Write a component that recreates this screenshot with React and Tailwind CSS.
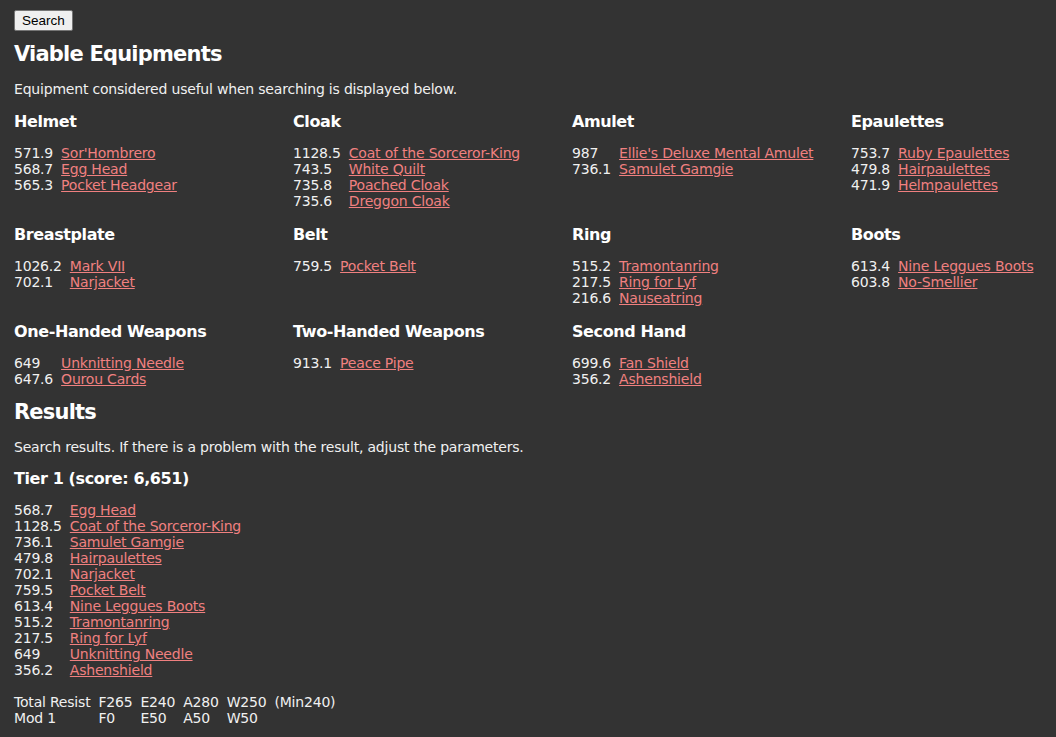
const viable = [
  {
    title: 'Helmet',
    items: [
      ['571.9', "Sor'Hombrero"],
      ['568.7', 'Egg Head'],
      ['565.3', 'Pocket Headgear'],
    ],
  },
  {
    title: 'Cloak',
    items: [
      ['1128.5', 'Coat of the Sorceror-King'],
      ['743.5', 'White Quilt'],
      ['735.8', 'Poached Cloak'],
      ['735.6', 'Dreggon Cloak'],
    ],
  },
  {
    title: 'Amulet',
    items: [
      ['987', "Ellie's Deluxe Mental Amulet"],
      ['736.1', 'Samulet Gamgie'],
    ],
  },
  {
    title: 'Epaulettes',
    items: [
      ['753.7', 'Ruby Epaulettes'],
      ['479.8', 'Hairpaulettes'],
      ['471.9', 'Helmpaulettes'],
    ],
  },
  {
    title: 'Breastplate',
    items: [
      ['1026.2', 'Mark VII'],
      ['702.1', 'Narjacket'],
    ],
  },
  {
    title: 'Belt',
    items: [['759.5', 'Pocket Belt']],
  },
  {
    title: 'Ring',
    items: [
      ['515.2', 'Tramontanring'],
      ['217.5', 'Ring for Lyf'],
      ['216.6', 'Nauseatring'],
    ],
  },
  {
    title: 'Boots',
    items: [
      ['613.4', 'Nine Leggues Boots'],
      ['603.8', 'No-Smellier'],
    ],
  },
  {
    title: 'One-Handed Weapons',
    items: [
      ['649', 'Unknitting Needle'],
      ['647.6', 'Ourou Cards'],
    ],
  },
  {
    title: 'Two-Handed Weapons',
    items: [['913.1', 'Peace Pipe']],
  },
  {
    title: 'Second Hand',
    items: [
      ['699.6', 'Fan Shield'],
      ['356.2', 'Ashenshield'],
    ],
  },
];

const tier = [
  ['568.7', 'Egg Head'],
  ['1128.5', 'Coat of the Sorceror-King'],
  ['736.1', 'Samulet Gamgie'],
  ['479.8', 'Hairpaulettes'],
  ['702.1', 'Narjacket'],
  ['759.5', 'Pocket Belt'],
  ['613.4', 'Nine Leggues Boots'],
  ['515.2', 'Tramontanring'],
  ['217.5', 'Ring for Lyf'],
  ['649', 'Unknitting Needle'],
  ['356.2', 'Ashenshield'],
];

function ItemTable({ items }) {
  return (
    <table>
      <tbody>
        {items.map(([score, name]) => (
          <tr key={name}>
            <td className="pr-2 p-0 align-top">{score}</td>
            <td className="p-0">
              <a href="#" className="text-[#f08080] underline">
                {name}
              </a>
            </td>
          </tr>
        ))}
      </tbody>
    </table>
  );
}

export default function App() {
  return (
    <div className="min-h-screen bg-[#333333] text-[#f0f0f0] font-['DejaVu_Sans',sans-serif] text-[14px] leading-4 tracking-[-0.2px] px-[14px] pt-[10px] pb-4">
      <button className="h-[21px] px-[7px] bg-[#efefef] border border-[#767676] rounded-[2px] text-black text-[13.5px] tracking-normal font-['Liberation_Sans',sans-serif] leading-none">
        Search
      </button>

      {/* Equipements retenus */}
      <h2 className="mt-[10px] text-[21px] leading-[26px] tracking-[-0.8px] font-bold text-white">Viable Equipments</h2>
      <p className="mt-[14px]">Equipment considered useful when searching is displayed below.</p>

      <div className="mt-[15px] grid grid-cols-[279px_279px_279px_minmax(0,1fr)] gap-y-[16px]">
        {viable.map((cat) => (
          <section key={cat.title} className="min-w-0">
            <h3 className="text-[16px] leading-5 tracking-[-0.4px] font-bold text-white mb-[13px]">{cat.title}</h3>
            <ItemTable items={cat.items} />
          </section>
        ))}
      </div>

      {/* Résultats */}
      <h2 className="mt-[12px] text-[21px] leading-[26px] tracking-[-0.8px] font-bold text-white">Results</h2>
      <p className="mt-[14px]">Search results. If there is a problem with the result, adjust the parameters.</p>

      <h3 className="mt-[14px] text-[16px] leading-5 tracking-[-0.4px] font-bold text-white mb-[13px]">Tier 1 (score: 6,651)</h3>
      <ItemTable items={tier} />

      <table className="mt-4">
        <tbody>
          <tr>
            <td className="pr-2 p-0">Total Resist</td>
            <td className="pr-2 p-0">F265</td>
            <td className="pr-2 p-0">E240</td>
            <td className="pr-2 p-0">A280</td>
            <td className="pr-2 p-0">W250</td>
            <td className="p-0">(Min240)</td>
          </tr>
          <tr>
            <td className="pr-2 p-0">Mod 1</td>
            <td className="pr-2 p-0">F0</td>
            <td className="pr-2 p-0">E50</td>
            <td className="pr-2 p-0">A50</td>
            <td className="pr-2 p-0">W50</td>
            <td className="p-0"></td>
          </tr>
        </tbody>
      </table>
    </div>
  );
}
